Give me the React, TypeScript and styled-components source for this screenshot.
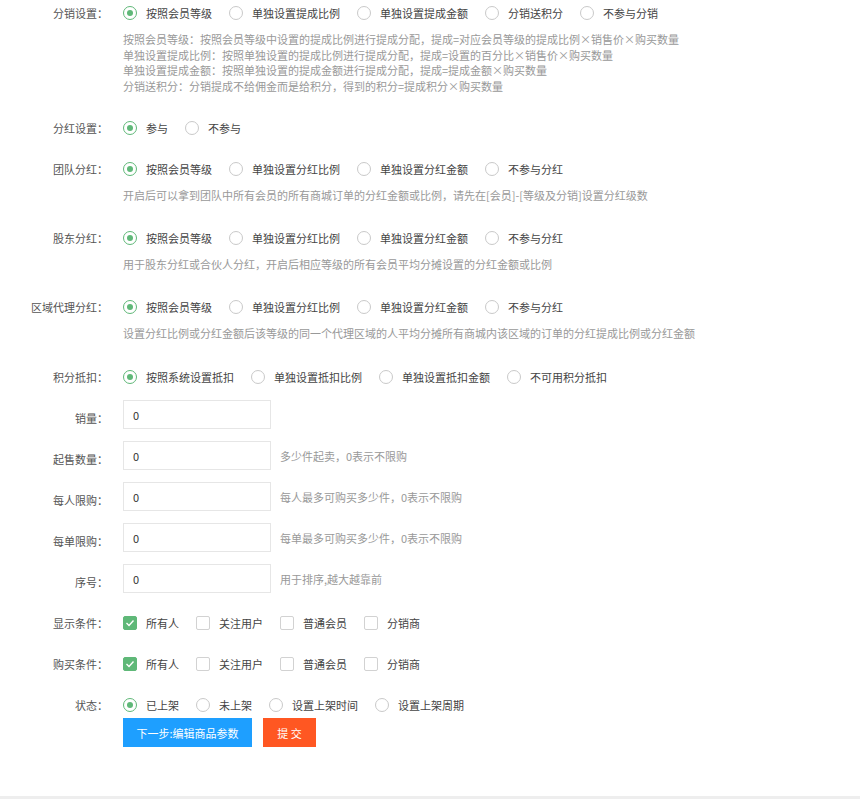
import React from "react";
import styled, { createGlobalStyle } from "styled-components";

const G = createGlobalStyle`
  body { margin:0; background:#fff; font-family:"Noto Sans CJK SC","Liberation Sans",sans-serif; font-size:11px; color:#333; }
`;
const Page = styled.div`
  height:799px; box-sizing:border-box; border-bottom:3px solid #eee; padding-top:4px;
`;
const Row = styled.div<{ h?: number }>`
  display:flex; align-items:flex-start; min-height:${p => p.h ?? 41}px;
`;
const Label = styled.div`
  width:108px; text-align:right; padding-right:15px; box-sizing:content-box; line-height:18px; color:#555; flex:none;
  padding-top:${p => 0}px;
`;
const Body = styled.div`display:flex; flex-direction:column;`;
const Opts = styled.div`display:flex; align-items:center; height:18px;`;
const Opt = styled.label`display:flex; align-items:center; margin-right:17px; color:#444;`;
const Radio = styled.span<{ on?: boolean }>`
  width:14px; height:14px; border-radius:50%; box-sizing:border-box; margin-right:9px;
  border:1px solid ${p => (p.on ? "#5fb878" : "#c9c9c9")}; display:flex; align-items:center; justify-content:center;
  &::after { content:""; width:6px; height:6px; border-radius:50%; background:${p => (p.on ? "#5fb878" : "transparent")}; }
`;
const Check = styled.span<{ on?: boolean }>`
  width:14px; height:14px; box-sizing:border-box; margin-right:9px; border-radius:2px;
  border:1px solid ${p => (p.on ? "#5fb878" : "#d2d2d2")}; background:${p => (p.on ? "#5fb878" : "#fff")};
  display:flex; align-items:center; justify-content:center;
`;
const Desc = styled.div`color:#999; line-height:15.5px; margin-top:10px;`;
const InRow = styled.div`display:flex; align-items:center; margin-top:-9px;`;
const Input = styled.div`
  width:148px; height:29px; box-sizing:border-box; border:1px solid #e6e6e6; padding-left:9px;
  display:flex; align-items:center; color:#333;
`;
const Aux = styled.span`color:#999; margin-left:9px;`;
const Btns = styled.div`display:flex; gap:11px; margin-left:123px;`;
const Btn = styled.div<{ c: string; w: number }>`
  width:${p => p.w}px; height:29px; background:${p => p.c}; color:#fff; display:flex; align-items:center; justify-content:center;
`;

const Radios = ({ items }: { items: string[] }) => (
  <Opts>{items.map((t, i) => <Opt key={t}><Radio on={i === 0} />{t}</Opt>)}</Opts>
);
const Checks = () => (
  <Opts>{["所有人", "关注用户", "普通会员", "分销商"].map((t, i) => (
    <Opt key={t}><Check on={i === 0}>{i === 0 && <svg width="10" height="10" viewBox="0 0 10 10"><path d="M1.5 5l2.5 2.5 4.5-5" stroke="#fff" strokeWidth="1.4" fill="none" /></svg>}</Check>{t}</Opt>
  ))}</Opts>
);

const fh = ["按照会员等级", "单独设置分红比例", "单独设置分红金额", "不参与分红"];

export default function App() {
  const inputs: [string, string?][] = [["销量："], ["起售数量：", "多少件起卖，0表示不限购"], ["每人限购：", "每人最多可购买多少件，0表示不限购"], ["每单限购：", "每单最多可购买多少件，0表示不限购"], ["序号：", "用于排序,越大越靠前"]];
  return (
    <Page>
      <G />
      <Row h={115}><Label>分销设置：</Label><Body>
        <Radios items={["按照会员等级", "单独设置提成比例", "单独设置提成金额", "分销送积分", "不参与分销"]} />
        <Desc>
          按照会员等级：按照会员等级中设置的提成比例进行提成分配，提成=对应会员等级的提成比例×销售价×购买数量<br />
          单独设置提成比例：按照单独设置的提成比例进行提成分配，提成=设置的百分比×销售价×购买数量<br />
          单独设置提成金额：按照单独设置的提成金额进行提成分配，提成=提成金额×购买数量<br />
          分销送积分：分销提成不给佣金而是给积分，得到的积分=提成积分×购买数量
        </Desc></Body></Row>
      <Row><Label>分红设置：</Label><Radios items={["参与", "不参与"]} /></Row>
      <Row h={69}><Label>团队分红：</Label><Body><Radios items={fh} /><Desc>开启后可以拿到团队中所有会员的所有商城订单的分红金额或比例，请先在[会员]-[等级及分销]设置分红级数</Desc></Body></Row>
      <Row h={69}><Label>股东分红：</Label><Body><Radios items={fh} /><Desc>用于股东分红或合伙人分红，开启后相应等级的所有会员平均分摊设置的分红金额或比例</Desc></Body></Row>
      <Row h={70}><Label>区域代理分红：</Label><Body><Radios items={fh} /><Desc>设置分红比例或分红金额后该等级的同一个代理区域的人平均分摊所有商城内该区域的订单的分红提成比例或分红金额</Desc></Body></Row>
      <Row><Label>积分抵扣：</Label><Radios items={["按照系统设置抵扣", "单独设置抵扣比例", "单独设置抵扣金额", "不可用积分抵扣"]} /></Row>
      {inputs.map(([l, a]) => (
        <Row key={l}><Label>{l}</Label><InRow><Input>0</Input>{a && <Aux>{a}</Aux>}</InRow></Row>
      ))}
      <Row><Label>显示条件：</Label><Checks /></Row>
      <Row><Label>购买条件：</Label><Checks /></Row>
      <Row h={22}><Label>状态：</Label><Radios items={["已上架", "未上架", "设置上架时间", "设置上架周期"]} /></Row>
      <Btns><Btn c="#1e9fff" w={129}>下一步:编辑商品参数</Btn><Btn c="#ff5722" w={53}>提 交</Btn></Btns>
    </Page>
  );
}
